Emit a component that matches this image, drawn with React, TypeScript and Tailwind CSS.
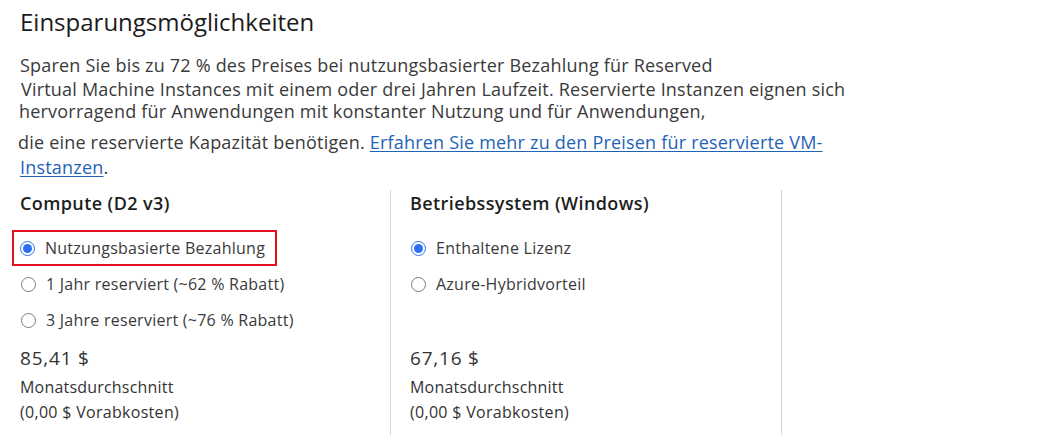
const font = { fontFamily: '"Segoe UI", "Open Sans", "Noto Sans", sans-serif' };

function Radio({ checked }: { checked?: boolean }) {
  if (checked) {
    return (
      <span className="flex h-[15px] w-[15px] shrink-0 items-center justify-center rounded-full border-[1.5px] border-[#2d6ff0] bg-white">
        <span className="h-[9px] w-[9px] rounded-full bg-[#2d6ff0]" />
      </span>
    );
  }
  return <span className="h-[15px] w-[15px] shrink-0 rounded-full border border-[#7a7a7a] bg-white" />;
}

function Option({ label, checked, boxed }: { label: string; checked?: boolean; boxed?: boolean }) {
  return (
    <div className="flex h-[36px] items-center">
      <div
        className={
          boxed
            ? "-ml-[8px] flex h-[36px] w-[265px] items-center gap-[10px] border-2 border-[#e3101e] pl-[6px]"
            : "flex items-center gap-[10px] pl-[1px]"
        }
      >
        <Radio checked={checked} />
        <span className="text-[16px] tracking-[0.25px] text-[#3a3a3a]">{label}</span>
      </div>
    </div>
  );
}

function Column({
  title,
  options,
  price,
  className,
}: {
  title: string;
  options: { label: string; checked?: boolean; boxed?: boolean }[];
  price: string;
  className: string;
}) {
  return (
    <div className={className}>
      <div className="flex h-[26px] items-center text-[18px] tracking-[0.4px] font-semibold text-[#1e1e1e]">{title}</div>
      <div className="mt-[14px] flex h-[108px] flex-col">
        {options.map((o) => (
          <Option key={o.label} {...o} />
        ))}
      </div>
      <div className="mt-[4px] flex h-[32px] items-center text-[19px] tracking-[0.8px] text-[#333]">{price}</div>
      <div className="flex h-[26px] items-center text-[16px] tracking-[0.2px] text-[#333]">Monatsdurchschnitt</div>
      <div className="flex h-[24px] items-center text-[16px] tracking-[0.3px] text-[#333]">(0,00 $ Vorabkosten)</div>
    </div>
  );
}

export default function App() {
  return (
    <div className="h-[435px] w-[1048px] overflow-hidden bg-white pl-[20px]" style={font}>
      <h2 className="flex h-[42px] items-center pt-[2px] text-[24px] font-normal text-[#1b1b1b]">
        Einsparungsmöglichkeiten
      </h2>
      <div className="mt-[10px] text-[18px] tracking-[0.2px] text-[#3a3a3a]">
        <div className="flex h-[26px] items-center whitespace-nowrap leading-[20px]">
          Sparen Sie bis zu 72 % des Preises bei nutzungsbasierter Bezahlung für Reserved
        </div>
        <div className="flex h-[22px] items-center whitespace-nowrap pl-[1px] leading-[20px]">
          Virtual Machine Instances mit einem oder drei Jahren Laufzeit. Reservierte Instanzen eignen sich
        </div>
        <div className="flex h-[21px] items-center whitespace-nowrap -ml-[1px] leading-[20px]">
          hervorragend für Anwendungen mit konstanter Nutzung und für Anwendungen,
        </div>
        <div className="mt-[9px] -ml-[2px] whitespace-nowrap leading-[25px]">
          die eine reservierte Kapazität benötigen.{" "}
          <a href="#" className="text-[#1f63b8] underline underline-offset-2">
            Erfahren Sie mehr zu den Preisen für reservierte VM-
          </a>
          <br />
          <span className="ml-[2px]">
            <a href="#" className="text-[#1f63b8] underline underline-offset-2">
              Instanzen
            </a>
            .
          </span>
        </div>
      </div>
      <div className="mt-[10px] flex h-[245px]">
        <Column
          className="w-[371px] border-r border-[#d6d6d6]"
          title="Compute (D2 v3)"
          options={[
            { label: "Nutzungsbasierte Bezahlung", checked: true, boxed: true },
            { label: "1 Jahr reserviert (~62 % Rabatt)" },
            { label: "3 Jahre reserviert (~76 % Rabatt)" },
          ]}
          price="85,41 $"
        />
        <Column
          className="w-[391px] border-r border-[#d6d6d6] pl-[19px]"
          title="Betriebssystem (Windows)"
          options={[{ label: "Enthaltene Lizenz", checked: true }, { label: "Azure-Hybridvorteil" }]}
          price="67,16 $"
        />
      </div>
    </div>
  );
}
